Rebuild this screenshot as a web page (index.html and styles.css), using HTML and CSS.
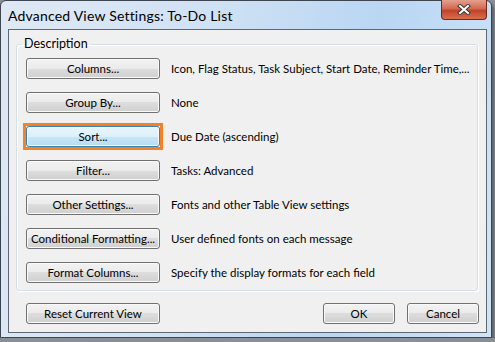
FILE: index.html
```html
<!DOCTYPE html>
<html lang="en">
<head>
    <meta charset="UTF-8">
    <meta name="viewport" content="width=device-width, initial-scale=1.0">
    <title>Advanced View Settings</title>
    <link rel="stylesheet" href="styles.css">
</head>
<body>

    <div class="window">

        <div class="titlebar">
            <span class="title">Advanced View Settings: To-Do List</span>
            <div class="close">
                <svg width="18" height="11" viewBox="0 0 18 11">
                    <path d="M5 2 L13 9 M13 2 L5 9" stroke="#3a3a3a" stroke-width="4" stroke-linecap="square"/>
                    <path d="M5 2 L13 9 M13 2 L5 9" stroke="#ffffff" stroke-width="2" stroke-linecap="square"/>
                </svg>
            </div>
        </div>

        <div class="client">

            <fieldset class="group">
                <legend>Description</legend>

                <div class="row">
                    <button class="btn">Columns...</button>
                    <span class="desc">Icon, Flag Status, Task Subject, Start Date, Reminder Time,...</span>
                </div>
                <div class="row">
                    <button class="btn">Group By...</button>
                    <span class="desc">None</span>
                </div>
                <div class="row">
                    <div class="mark">
                        <button class="btn hot">Sort...</button>
                    </div>
                    <span class="desc">Due Date (ascending)</span>
                </div>
                <div class="row">
                    <button class="btn">Filter...</button>
                    <span class="desc">Tasks: Advanced</span>
                </div>
                <div class="row">
                    <button class="btn">Other Settings...</button>
                    <span class="desc">Fonts and other Table View settings</span>
                </div>
                <div class="row">
                    <button class="btn">Conditional Formatting...</button>
                    <span class="desc">User defined fonts on each message</span>
                </div>
                <div class="row">
                    <button class="btn">Format Columns...</button>
                    <span class="desc">Specify the display formats for each field</span>
                </div>
            </fieldset>

            <div class="footer">
                <button class="btn">Reset Current View</button>
                <div class="actions">
                    <button class="btn small">OK</button>
                    <button class="btn small">Cancel</button>
                </div>
            </div>

        </div>

    </div>

</body>
</html>
```

FILE: styles.css
```css
html, body {
    margin: 0;
    padding: 0;
    background: #8a8f96;
    font-family: Lato, "Noto Sans", sans-serif;
    font-size: 11.5px;
    color: #000;
}

.window {
    width: 492px;
    height: 338px;
    box-sizing: border-box;
    border: 1px solid #3d4650;
    border-radius: 6px 6px 0 0;
    background: linear-gradient(100deg, #dfe9f5 0%, #cfe1f4 40%, #b9d6f3 70%, #cfe4f8 100%);
    box-shadow: 2px 3px 3px rgba(60, 60, 60, 0.6);
    display: flex;
    flex-direction: column;
}

.titlebar {
    height: 28px;
    flex: none;
    display: flex;
    align-items: flex-start;
    padding-left: 7px;
}

.title {
    margin-top: 6px;
    font-size: 14px;
    letter-spacing: 0.2px;
    color: #000;
}

.close {
    margin-left: auto;
    margin-right: 4px;
    margin-top: -1px;
    width: 46px;
    height: 20px;
    box-sizing: border-box;
    border: 1px solid #6b2a20;
    border-top: none;
    border-radius: 0 0 4px 4px;
    background: linear-gradient(#e5a08f 0%, #d36a52 45%, #c1432a 55%, #d96e4c 100%);
    display: flex;
    align-items: center;
    justify-content: center;
}

.client {
    margin: 0 4px 4px 7px;
    flex: 1;
    border: 1px solid #5d6873;
    background: #f0f0f0;
    display: flex;
    flex-direction: column;
    padding: 0 7px;
}

.group {
    margin: 7px 0 0 0;
    padding: 7px 0 0 9px;
    min-width: 0;
    width: 462px;
    height: 254px;
    box-sizing: border-box;
    border: 1px solid #d5dfe5;
    box-shadow: inset 1px 1px 0 #fff, 1px 1px 0 #fff;
    border-radius: 3px;
    display: flex;
    flex-direction: column;
    gap: 13px;
}

.group legend {
    padding: 0 2px;
    margin-left: -4px;
    line-height: 14px;
    font-size: 12.5px;
}

.row {
    display: flex;
    align-items: center;
    height: 21px;
}

.btn {
    flex: none;
    width: 134px;
    height: 21px;
    padding: 0;
    box-sizing: border-box;
    border: 1px solid #707070;
    border-radius: 3px;
    font-family: Lato, "Noto Sans", sans-serif;
    font-size: 11.5px;
    color: #000;
    white-space: nowrap;
    background: linear-gradient(#f2f2f2 0%, #ebebeb 50%, #dddddd 50%, #cfcfcf 100%);
    box-shadow: inset 0 0 0 1px #fafafa;
}

.btn.hot {
    border-color: #3c7fb1;
    background: linear-gradient(#e8f5fc 0%, #dcf0fb 50%, #c7e7f8 50%, #b6dcf2 100%);
}

.mark {
    flex: none;
    margin: -3px;
    border: 3px solid #f28225;
    display: flex;
}

.desc {
    margin-left: 11px;
    white-space: nowrap;
}

.footer {
    display: flex;
    align-items: center;
    margin-top: 12px;
    padding-left: 10px;
}

.actions {
    margin-left: auto;
    display: flex;
    gap: 12px;
}

.btn.small {
    width: 72px;
}
```
